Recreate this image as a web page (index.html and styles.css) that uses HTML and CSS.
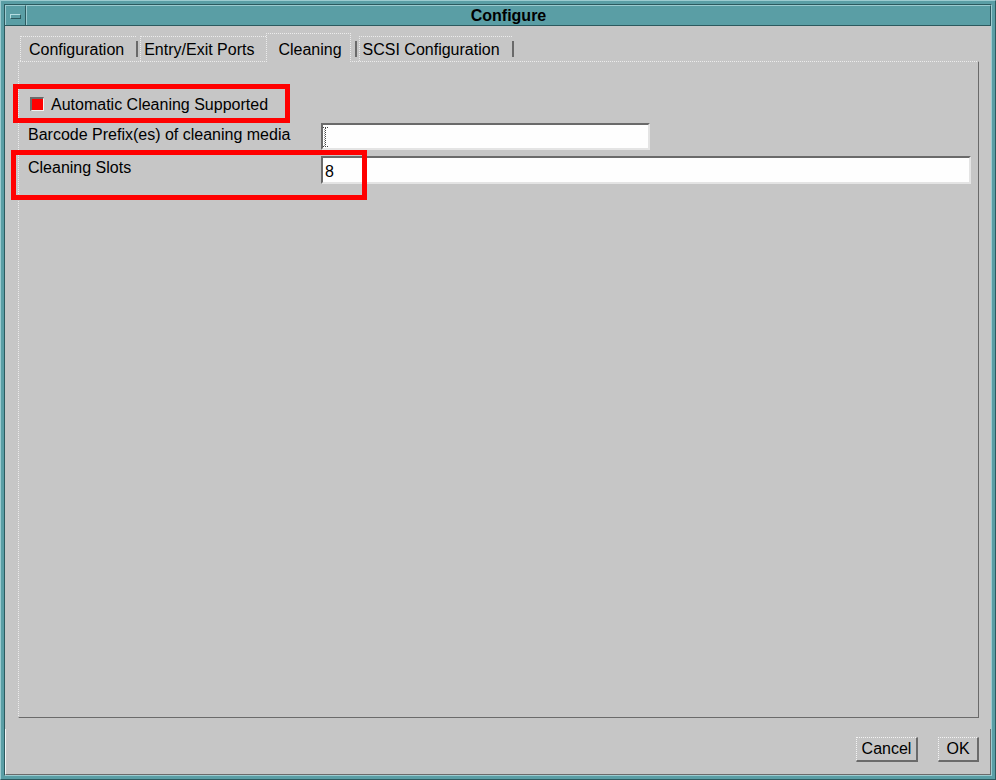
FILE: index.html
```html
<!DOCTYPE html>
<html lang="en">

<head>
    <meta charset="UTF-8">
    <title>Configure</title>
    <link rel="stylesheet" href="styles.css">
</head>

<body>
    <div class="window">
        <div class="inner">
            <div class="titlebar">
                <div class="menu-btn"><span class="menu-icon"></span></div>
                <div class="title">Configure</div>
            </div>
            <div class="dialog">
                <div class="tabs">
                    <div class="tab first">Configuration</div>
                    <span class="tab-sep"></span>
                    <div class="tab">Entry/Exit Ports</div>
                    <div class="tab active">Cleaning</div>
                    <span class="tab-sep after-active"></span>
                    <div class="tab">SCSI Configuration</div>
                    <span class="tab-sep"></span>
                </div>
                <div class="panel">
                    <div class="row check-row">
                        <span class="checkbox checked"></span>
                        <span class="check-label">Automatic Cleaning Supported</span>
                    </div>
                    <div class="row field-row">
                        <label class="field-label">Barcode Prefix(es) of cleaning media</label>
                        <div class="field short">
                            <svg class="ibeam" width="5" height="20" viewBox="0 0 5 20">
                                <path d="M0 0.5h5M0 19.5h5" stroke="#444" stroke-dasharray="1 1" />
                                <path d="M2.5 1v18" stroke="#444" stroke-dasharray="1 1" />
                                <path d="M1.5 1v18" stroke="#999" stroke-dasharray="1 1" stroke-dashoffset="1" />
                            </svg>
                        </div>
                    </div>
                    <div class="row field-row">
                        <label class="field-label">Cleaning Slots</label>
                        <div class="field long">8</div>
                    </div>
                </div>
                <div class="actions">
                    <button class="btn btn-cancel">Cancel</button>
                    <button class="btn btn-ok">OK</button>
                </div>
            </div>
        </div>

        <!-- red annotation boxes -->
        <div class="mark mark-check"></div>
        <div class="mark mark-slots"></div>
    </div>
</body>

</html>
```

FILE: styles.css
```css
* {
    margin: 0;
    padding: 0;
    box-sizing: border-box;
}

body {
    font-family: "Liberation Sans", Arial, sans-serif;
    font-size: 16px;
    color: #000;
    background-color: #5a9ea5;
}

.window {
    position: relative;
    width: 996px;
    height: 780px;
    padding: 3px;
    background-color: #5a9ea5;
    border-top: 1px solid #9ccbd0;
    border-left: 1px solid #9ccbd0;
    border-right: 1px solid #2c5a5f;
    border-bottom: 1px solid #2c5a5f;
}

.inner {
    height: 100%;
    display: flex;
    flex-direction: column;
    border-top: 1px solid #2c5a5f;
    border-left: 1px solid #2c5a5f;
    border-right: 1px solid #9ccbd0;
    border-bottom: 1px solid #9ccbd0;
}

/* title bar */

.titlebar {
    display: flex;
    height: 21px;
    background-color: #5a9ea5;
    border-bottom: 1px solid #2c5a5f;
}

.menu-btn {
    width: 21px;
    display: flex;
    align-items: center;
    justify-content: center;
    border-top: 1px solid #9ccbd0;
    border-left: 1px solid #9ccbd0;
    border-right: 1px solid #2c5a5f;
}

.menu-icon {
    width: 11px;
    height: 5px;
    margin-top: 1px;
    border-top: 1px solid #b4dde1;
    border-left: 1px solid #b4dde1;
    border-right: 1px solid #2c5a5f;
    border-bottom: 1px solid #2c5a5f;
}

.title {
    flex: 1;
    text-align: center;
    font-weight: bold;
    line-height: 20px;
    border-top: 1px solid #9ccbd0;
    border-left: 1px solid #9ccbd0;
    border-right: 1px solid #2c5a5f;
}

/* dialog body */

.dialog {
    flex: 1;
    display: flex;
    flex-direction: column;
    background-color: #c6c6c6;
    padding-top: 7px;
}

.tabs {
    display: flex;
    align-items: flex-end;
    height: 28px;
    padding-left: 15px;
}

.tab {
    height: 25px;
    line-height: 23px;
    padding: 1px 12px 0 3px;
    border-top: 1px dotted #ececec;
    border-left: 1px dotted #ececec;
    white-space: nowrap;
}

.tab.first {
    padding-left: 8px;
}

.tab.active {
    position: relative;
    height: 29px;
    margin-bottom: -1px;
    padding: 4px 8px 0 11px;
    border-right: 1px dotted #ececec;
    background-color: #c6c6c6;
    z-index: 1;
}

.tab-sep {
    width: 2px;
    height: 16px;
    margin: 0 2px 4px 0;
    background-color: #6a6a6a;
}

.tab-sep.after-active {
    margin-left: 4px;
}

.panel {
    height: 657px;
    margin: 0 12px 0 13px;
    padding: 32px 7px 0 9px;
    border-top: 1px dotted #ececec;
    border-left: 1px dotted #ececec;
    border-right: 1px solid #6a6a6a;
    border-bottom: 1px solid #6a6a6a;
}

.row {
    display: flex;
}

.check-row {
    height: 20px;
    align-items: center;
    margin-bottom: 9px;
}

.check-label {
    padding-top: 1px;
}

.checkbox {
    width: 14px;
    height: 14px;
    margin: 0 7px 0 2px;
    border-top: 2px solid #6a6a6a;
    border-left: 2px solid #6a6a6a;
    border-right: 1px solid #f4f4f4;
    border-bottom: 1px solid #f4f4f4;
}

.checkbox.checked {
    background-color: #ff0000;
}

.field-row {
    margin-bottom: 6px;
}

.field-label {
    width: 293px;
    padding-top: 3px;
    line-height: 18px;
}

.field {
    height: 27px;
    padding: 2px 0 0 2px;
    line-height: 24px;
    background-color: #fefefe;
    border-top: 2px solid #6a6a6a;
    border-left: 2px solid #6a6a6a;
    border-right: 2px solid #e4e4e4;
    border-bottom: 2px solid #e4e4e4;
}

.field.short {
    width: 329px;
    padding: 2px 0 0 0;
}

.field.long {
    flex: 1;
    height: 28px;
}

.ibeam {
    display: block;
}

/* buttons */

.actions {
    display: flex;
    justify-content: flex-end;
    gap: 20px;
    height: 46px;
    margin-top: 11px;
    padding: 8px 11px 0 0;
    border-left: 1px solid #f4f4f4;
    border-right: 1px solid #6a6a6a;
    border-bottom: 1px solid #6a6a6a;
}

.btn {
    height: 25px;
    padding: 0;
    font-family: inherit;
    font-size: 16px;
    line-height: 20px;
    color: #000;
    background-color: #c6c6c6;
    border-top: 1px dotted #f4f4f4;
    border-left: 1px dotted #f4f4f4;
    border-right: 2px solid #6a6a6a;
    border-bottom: 2px solid #6a6a6a;
}

.btn-cancel {
    width: 62px;
}

.btn-ok {
    width: 41px;
}

.mark {
    position: absolute;
    border: 5px solid #ff0000;
}

.mark-check {
    left: 12px;
    top: 83px;
    width: 277px;
    height: 39px;
}

.mark-slots {
    left: 10px;
    top: 149px;
    width: 356px;
    height: 50px;
}
```
